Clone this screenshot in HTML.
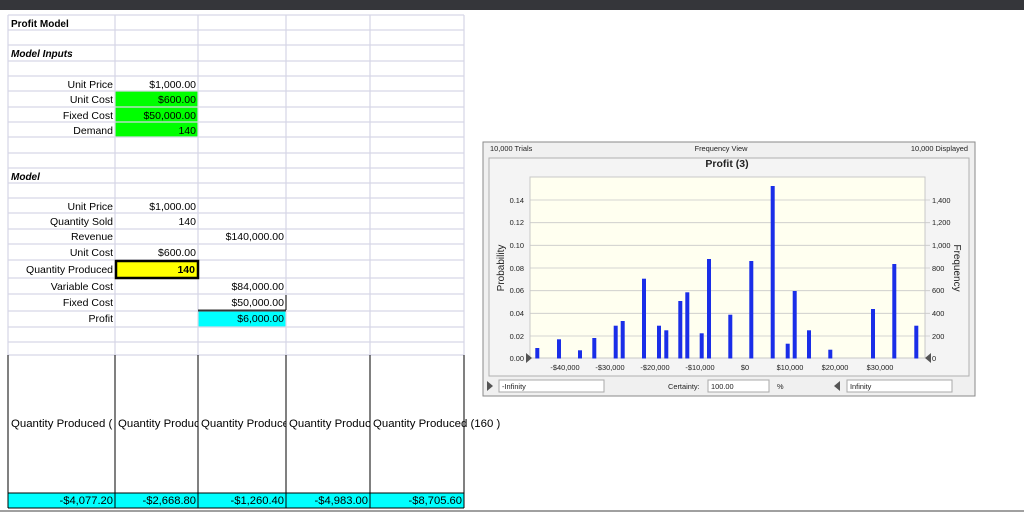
<!DOCTYPE html>
<html><head><meta charset="utf-8"><style>
html,body{margin:0;padding:0;background:#fff;width:1024px;height:516px;overflow:hidden}
svg{display:block}
text{font-family:"Liberation Sans",Arial,sans-serif}
</style></head><body>
<svg width="1024" height="516" viewBox="0 0 1024 516" xmlns="http://www.w3.org/2000/svg">
<rect x="0" y="0" width="1024" height="10" fill="#35363a"/>
<rect x="115" y="91" width="83" height="46" fill="#00ff00"/>
<rect x="115" y="260" width="83" height="18" fill="#ffff00"/>
<rect x="198" y="311" width="88" height="16" fill="#00ffff"/>
<rect x="8" y="493" width="456" height="15" fill="#00ffff"/>
<g stroke="#d6d6e6" stroke-width="1.2">
<line x1="8" y1="15" x2="464" y2="15"/><line x1="8" y1="30" x2="464" y2="30"/><line x1="8" y1="45" x2="464" y2="45"/><line x1="8" y1="61" x2="464" y2="61"/><line x1="8" y1="76" x2="464" y2="76"/><line x1="8" y1="91" x2="464" y2="91"/><line x1="8" y1="107" x2="464" y2="107"/><line x1="8" y1="122" x2="464" y2="122"/><line x1="8" y1="137" x2="464" y2="137"/><line x1="8" y1="153" x2="464" y2="153"/><line x1="8" y1="168" x2="464" y2="168"/><line x1="8" y1="183" x2="464" y2="183"/><line x1="8" y1="198" x2="464" y2="198"/><line x1="8" y1="213" x2="464" y2="213"/><line x1="8" y1="229" x2="464" y2="229"/><line x1="8" y1="244" x2="464" y2="244"/><line x1="8" y1="260" x2="464" y2="260"/><line x1="8" y1="278" x2="464" y2="278"/><line x1="8" y1="294" x2="464" y2="294"/><line x1="8" y1="311" x2="464" y2="311"/><line x1="8" y1="327" x2="464" y2="327"/><line x1="8" y1="342" x2="464" y2="342"/><line x1="8" y1="355" x2="464" y2="355"/>
<line x1="8" y1="15" x2="8" y2="355"/><line x1="115" y1="15" x2="115" y2="355"/><line x1="198" y1="15" x2="198" y2="355"/><line x1="286" y1="15" x2="286" y2="355"/><line x1="370" y1="15" x2="370" y2="355"/><line x1="464" y1="15" x2="464" y2="355"/>
</g>
<rect x="116" y="261" width="82" height="17" fill="none" stroke="#000" stroke-width="2.5"/>
<line x1="198" y1="310.5" x2="286" y2="310.5" stroke="#333" stroke-width="2"/>
<line x1="286" y1="295" x2="286" y2="310" stroke="#000" stroke-width="1"/>
<g stroke="#000" stroke-width="1">
<line x1="8" y1="355" x2="8" y2="508"/><line x1="115" y1="355" x2="115" y2="508"/><line x1="198" y1="355" x2="198" y2="508"/><line x1="286" y1="355" x2="286" y2="508"/><line x1="370" y1="355" x2="370" y2="508"/><line x1="464" y1="355" x2="464" y2="508"/>
<line x1="8" y1="493" x2="464" y2="493"/><line x1="8" y1="508" x2="464" y2="508"/>
</g>
<rect x="0" y="510" width="1024" height="2" fill="#a0a0a0"/>
<g font-size="10.5" fill="#000">
<text x="11" y="27" font-weight="bold" font-size="10">Profit Model</text>
<text x="11" y="57" font-weight="bold" font-style="italic" font-size="10">Model Inputs</text>
<text x="11" y="180" font-weight="bold" font-style="italic" font-size="10">Model</text>
<g text-anchor="end">
<text x="113" y="88">Unit Price</text><text x="113" y="103">Unit Cost</text><text x="113" y="119">Fixed Cost</text><text x="113" y="134">Demand</text>
<text x="196" y="88">$1,000.00</text><text x="196" y="103">$600.00</text><text x="196" y="119">$50,000.00</text><text x="196" y="134">140</text>
<text x="113" y="210">Unit Price</text><text x="113" y="225">Quantity Sold</text><text x="113" y="240">Revenue</text><text x="113" y="256">Unit Cost</text><text x="113" y="273">Quantity Produced</text><text x="113" y="290">Variable Cost</text><text x="113" y="306">Fixed Cost</text><text x="113" y="322">Profit</text>
<text x="196" y="210">$1,000.00</text><text x="196" y="225">140</text><text x="196" y="256">$600.00</text><text x="195" y="273" font-weight="bold">140</text>
<text x="284" y="240">$140,000.00</text><text x="284" y="290">$84,000.00</text><text x="284" y="306">$50,000.00</text><text x="284" y="322">$6,000.00</text>
<text x="113" y="504" font-size="11.2">-$4,077.20</text><text x="196" y="504" font-size="11.2">-$2,668.80</text><text x="284" y="504" font-size="11.2">-$1,260.40</text><text x="368" y="504" font-size="11.2">-$4,983.00</text><text x="462" y="504" font-size="11.2">-$8,705.60</text>
</g>
<g font-size="11.4">
<text x="11" y="427">Quantity Produced (</text>
<svg x="115" y="400" width="83" height="40"><text x="3" y="27">Quantity Produced</text></svg>
<svg x="198" y="400" width="88" height="40"><text x="3" y="27">Quantity Produced</text></svg>
<svg x="286" y="400" width="84" height="40"><text x="3" y="27">Quantity Produced</text></svg>
<text x="373" y="427">Quantity Produced (160 )</text>
</g>
</g>
<rect x="483" y="142" width="492" height="254" fill="#f0f0f0" stroke="#8a8a8a"/>
<rect x="489" y="158" width="480" height="218" fill="#f4f4f4" stroke="#b0b0b0"/>
<rect x="530" y="177" width="395" height="181" fill="#fffff0" stroke="#c8c8c8"/>
<g stroke="#c8c8c8" stroke-width="0.8">
<line x1="530" y1="200" x2="930" y2="200"/><line x1="530" y1="222.7" x2="930" y2="222.7"/><line x1="530" y1="245.3" x2="930" y2="245.3"/><line x1="530" y1="268" x2="930" y2="268"/><line x1="530" y1="290.7" x2="930" y2="290.7"/><line x1="530" y1="313.3" x2="930" y2="313.3"/><line x1="530" y1="336" x2="930" y2="336"/>
</g>
<g fill="#1a2ee8">
<rect x="535.3" y="348" width="4" height="10.5"/><rect x="557" y="339.3" width="4" height="19.2"/><rect x="578" y="350.3" width="4" height="8.2"/><rect x="592.3" y="338" width="4" height="20.5"/><rect x="613.7" y="325.7" width="4" height="32.8"/><rect x="620.7" y="321" width="4" height="37.5"/><rect x="642" y="278.7" width="4" height="79.8"/><rect x="657" y="325.7" width="4" height="32.8"/><rect x="664.3" y="330.3" width="4" height="28.2"/><rect x="678.3" y="301" width="4" height="57.5"/><rect x="685.3" y="292.3" width="4" height="66.2"/><rect x="699.7" y="333.3" width="4" height="25.2"/><rect x="707" y="259" width="4" height="99.5"/><rect x="728.3" y="314.7" width="4" height="43.8"/><rect x="749.3" y="261" width="4" height="97.5"/><rect x="770.7" y="186" width="4" height="172.5"/><rect x="785.7" y="343.7" width="4" height="14.8"/><rect x="792.7" y="291" width="4" height="67.5"/><rect x="807" y="330.3" width="4" height="28.2"/><rect x="828.3" y="349.7" width="4" height="8.8"/><rect x="871" y="309" width="4" height="49.5"/><rect x="892.3" y="264" width="4" height="94.5"/><rect x="914.3" y="325.7" width="4" height="32.8"/>
</g>
<g font-size="7.4" fill="#222">
<text x="490" y="151">10,000 Trials</text>
<text x="721" y="151" text-anchor="middle">Frequency View</text>
<text x="968" y="151" text-anchor="end">10,000 Displayed</text>
<text x="727" y="167" text-anchor="middle" font-size="10.5" font-weight="bold">Profit (3)</text>
<g text-anchor="end"><text x="524" y="203">0.14</text><text x="524" y="225">0.12</text><text x="524" y="248">0.10</text><text x="524" y="271">0.08</text><text x="524" y="293">0.06</text><text x="524" y="316">0.04</text><text x="524" y="339">0.02</text><text x="524" y="361">0.00</text></g>
<g><text x="932" y="203">1,400</text><text x="932" y="225">1,200</text><text x="932" y="248">1,000</text><text x="932" y="271">800</text><text x="932" y="293">600</text><text x="932" y="316">400</text><text x="932" y="339">200</text><text x="932" y="361">0</text></g>
<text transform="translate(504,268) rotate(-90)" text-anchor="middle" font-size="10">Probability</text>
<text transform="translate(954,268) rotate(90)" text-anchor="middle" font-size="10">Frequency</text>
<g text-anchor="middle"><text x="565" y="370">-$40,000</text><text x="610" y="370">-$30,000</text><text x="655" y="370">-$20,000</text><text x="700" y="370">-$10,000</text><text x="745" y="370">$0</text><text x="790" y="370">$10,000</text><text x="835" y="370">$20,000</text><text x="880" y="370">$30,000</text></g>
<polygon points="526,353 532,358 526,363" fill="#555"/>
<polygon points="931,353 925,358 931,363" fill="#555"/>
<polygon points="487,381 493,386 487,391" fill="#555"/>
<rect x="499" y="380" width="105" height="12" fill="#fff" stroke="#aaa"/>
<text x="502" y="389">-Infinity</text>
<text x="668" y="389">Certainty:</text>
<rect x="708" y="380" width="61" height="12" fill="#fff" stroke="#aaa"/>
<text x="711" y="389">100.00</text>
<text x="777" y="389">%</text>
<polygon points="840,381 834,386 840,391" fill="#555"/>
<rect x="847" y="380" width="105" height="12" fill="#fff" stroke="#aaa"/>
<text x="850" y="389">Infinity</text>
</g>
</svg>
</body></html>
